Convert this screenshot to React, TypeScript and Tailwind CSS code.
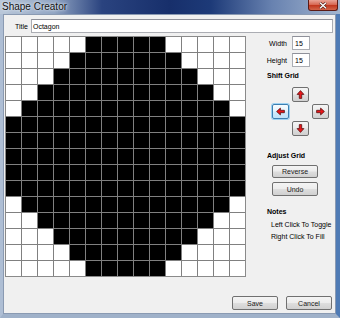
import React from 'react';

const SIZE = 15;

const isOn = (r: number, c: number) => {
  const w = Math.max(0, 5 - r, r - 9);
  return c >= w && c < SIZE - w;
};

const btn =
  'flex items-center justify-center rounded-[2px] border border-[#707070] bg-[linear-gradient(#f4f4f4_0%,#ececec_48%,#dedede_52%,#d0d0d0_100%)] text-[#1a1a1a]';

const btnFocus =
  'flex items-center justify-center rounded-[2px] border border-[#3c7fb1] bg-[linear-gradient(#f6fbfe_0%,#e4f3fc_48%,#cfeafb_52%,#bfe2f8_100%)] shadow-[0_0_0_1px_#9ed2f2]';

const rotation = {
  up: '',
  right: 'rotate-90',
  down: 'rotate-180',
  left: '-rotate-90',
};

const Arrow = ({ dir }: { dir: keyof typeof rotation }) => (
  <svg width="9" height="9" viewBox="0 0 9 9" className={rotation[dir]}>
    <path
      d="M4.5 0.6 L7.9 4.4 L5.7 4.4 L5.7 8.4 L3.3 8.4 L3.3 4.4 L1.1 4.4 Z"
      fill="#e8161a"
      stroke="#5c1212"
      strokeWidth="0.8"
      strokeLinejoin="round"
    />
  </svg>
);

const Field = ({ label, value }: { label: string; value: string }) => (
  <div className="flex items-center gap-[5px]">
    <span className="w-[41px] text-right">{label}</span>
    <div className="flex h-[14px] w-[18px] items-center border border-[#abadb3] border-t-[#8e9099] bg-white pl-[2px]">
      {value}
    </div>
  </div>
);

export default function App() {
  return (
    <div className="flex h-[318px] w-[340px] flex-col bg-[linear-gradient(90deg,#b9c7d9_0%,#8fa3c2_16%,#2a437f_30%,#172f6b_50%,#1d3a78_62%,#6882b0_80%,#a2b5cf_100%)] font-['Liberation_Sans',Arial,sans-serif] text-[7px] leading-[9px] text-black">
      {/* title bar */}
      <div className="flex h-[14px] items-start justify-between">
        <span className="pl-[2px] pt-[1px] text-[10px] leading-[12px] text-[#111] [text-shadow:0_0_4px_#e8eef6,0_0_2px_#e8eef6]">
          Shape Creator
        </span>
        <div className="mr-[2px] flex h-[11px] w-[30px] items-center justify-center rounded-b-[3px] border border-t-0 border-[#5b1a14] bg-[linear-gradient(#e9a497_0%,#d86a55_45%,#c2381f_55%,#d2644a_100%)]">
          <svg width="8" height="7" viewBox="0 0 8 7">
            <path d="M1 0.8 L7 6.2 M7 0.8 L1 6.2" stroke="#4a1a14" strokeWidth="2.6" />
            <path d="M1 0.8 L7 6.2 M7 0.8 L1 6.2" stroke="#ffffff" strokeWidth="1.4" />
          </svg>
        </div>
      </div>

      {/* frame + body */}
      <div className="flex flex-1 border-b-[4px] border-l-[3px] border-r-[4px] border-b-[#9fb1c9] border-l-[#aebed4] border-r-[#4f7bb5]">
        <div className="flex flex-1 flex-col border border-[#8a9ab2] bg-[#f0f0f0]">
          {/* title row */}
          <div className="flex items-center gap-[3px] pl-[11px] pr-[2px] pt-[4px]">
            <span>Title</span>
            <div className="flex h-[14px] flex-1 items-center border border-[#abadb3] border-t-[#8e9099] bg-white pl-[1px]">
              Octagon
            </div>
          </div>

          <div className="mt-[3px] flex pl-[1px]">
            {/* drawing grid */}
            <div className="grid grid-cols-[repeat(15,15px)] grid-rows-[repeat(15,15px)] gap-px border border-[#8a8a8a] bg-[#808080]">
              {Array.from({ length: SIZE * SIZE }, (_, i) => {
                const r = Math.floor(i / SIZE);
                const c = i % SIZE;
                return <div key={i} className={isOn(r, c) ? 'bg-black' : 'bg-white'} />;
              })}
            </div>

            {/* side panel */}
            <div className="flex flex-col">
              <Field label="Width" value="15" />
              <div className="mt-[3px]">
                <Field label="Height" value="15" />
              </div>
              <span className="ml-[21px] mt-[4px] font-bold">Shift Grid</span>
              <div className="ml-[26px] mt-[7px] grid grid-cols-[17px_17px_17px] grid-rows-[15px_15px_15px] gap-x-[3px] gap-y-[2px]">
                <div />
                <div className={btn}>
                  <Arrow dir="up" />
                </div>
                <div />
                <div className={btnFocus}>
                  <Arrow dir="left" />
                </div>
                <div />
                <div className={btn}>
                  <Arrow dir="right" />
                </div>
                <div />
                <div className={btn}>
                  <Arrow dir="down" />
                </div>
                <div />
              </div>
              <span className="ml-[21px] mt-[15px] font-bold">Adjust Grid</span>
              <div className={`${btn} ml-[26px] mt-[5px] h-[13px] w-[46px]`}>Reverse</div>
              <div className={`${btn} ml-[26px] mt-[4px] h-[14px] w-[46px]`}>Undo</div>
              <span className="ml-[21px] mt-[11px] font-bold">Notes</span>
              <span className="ml-[25px] mt-[4px]">Left Click To Toggle</span>
              <span className="ml-[25px] mt-[3px]">Right Click To Fill</span>
            </div>
          </div>

          <div className="flex-1" />

          {/* footer buttons */}
          <div className="flex justify-end gap-[8px] pb-[3px] pr-[3px]">
            <div className={`${btn} h-[14px] w-[46px]`}>Save</div>
            <div className={`${btn} h-[14px] w-[46px]`}>Cancel</div>
          </div>
        </div>
      </div>
    </div>
  );
}
